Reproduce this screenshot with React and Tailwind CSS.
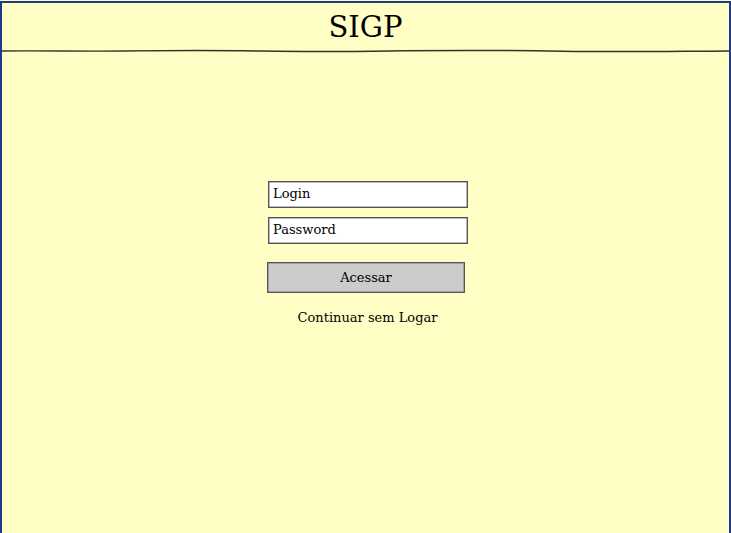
export default function App() {
  return (
    <div className="h-[533px] w-[731px] overflow-hidden bg-[#ffffc5] pt-[1px]">
      <div className="flex h-full flex-col border-x-2 border-t-2 border-[#1e3a8a] bg-[#ffffc5] font-['DejaVu_Serif',serif] text-black">
        {/* cabeçalho */}
        <div className="relative flex h-[48px] items-center justify-center">
          <h1 className="text-[29px] leading-none">SIGP</h1>
          <svg className="absolute bottom-[-3px] left-0" width="727" height="6" viewBox="0 0 727 6" preserveAspectRatio="none">
            <path
              d="M0 3 C40 2.5 80 3.5 120 3 S200 2 260 3 S340 3.6 400 2.8 S500 2.2 560 3.2 S660 3.4 727 3"
              fill="none"
              stroke="#333"
              strokeWidth="1.5"
            />
          </svg>
        </div>

        {/* formulário */}
        <div className="flex flex-col items-center pt-[130px]">
          <div className="ml-[5px] flex w-[200px] flex-col gap-[9px]">
            <div className="h-[27px] border border-[#555] bg-white px-[4px] pt-[5px] text-[13px] leading-none shadow-[inset_0_0_0_0.5px_#777]">
              Login
            </div>
            <div className="h-[27px] border border-[#555] bg-white px-[4px] pt-[5px] text-[13px] leading-none shadow-[inset_0_0_0_0.5px_#777]">
              Password
            </div>
          </div>
          <button className="mt-[18px] ml-[1px] h-[31px] w-[198px] border border-[#555] bg-[#cccccc] text-[13px] shadow-[inset_0_0_0_0.5px_#777]">
            Acessar
          </button>
          <div className="mt-[15px] ml-[4px] text-[13px]">Continuar sem Logar</div>
        </div>
      </div>
    </div>
  );
}
